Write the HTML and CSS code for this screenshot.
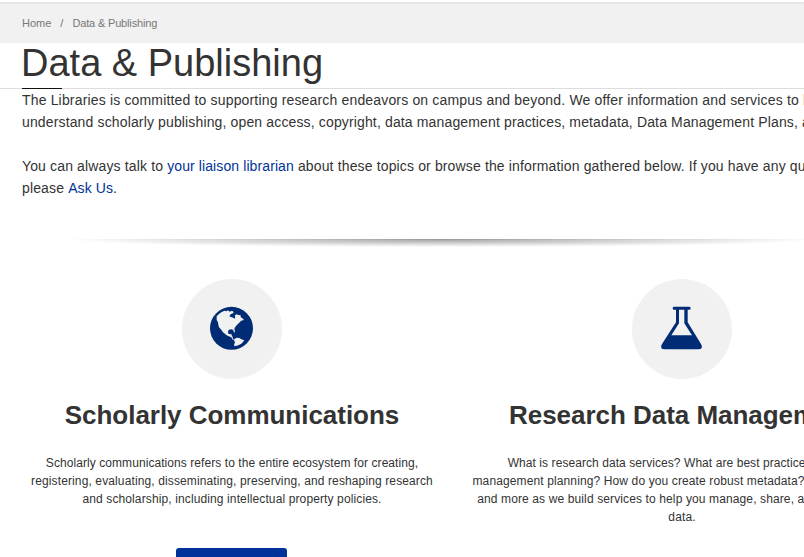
FILE: index.html
```
<!DOCTYPE html>
<html lang="en">
<head>
<meta charset="utf-8">
<title>Data &amp; Publishing</title>
<link rel="stylesheet" href="styles.css">
</head>
<body>
<nav class="breadcrumb"><a>Home</a><span class="sep">/</span><span class="current">Data &amp; Publishing</span></nav>
<header class="page-title"><h1>Data &amp; Publishing</h1></header>
<main>
<section class="intro">
<p><span class="lead">The Libraries is committed to supporting research endeavors on campus and beyond. We offer information and services to help</span><br>understand scholarly publishing, open access, copyright, data management practices, metadata, Data Management Plans, and</p>
<p>You can always talk to <a>your liaison librarian</a> about these topics or browse the information gathered below. If you have any questions<br>please <a>Ask Us</a>.</p>
</section>
<div class="divider"></div>
<section class="cards">
<article class="card">
<div class="icon"><svg viewBox="0 0 192 168" width="64" height="56"><circle cx="94.500" cy="85" r="64.500" fill="#002b75"/><path fill="#f1f1f1" d="M50 49L57 42 65 36 74 32 80 34 84 31 89 35 96 32 101 36 99 40 92 43 88 49 93 51 100 53 104 56 106 51 104 47 109 43 115 45 122 46 122 51 131 58 130 61 123 62 120 66 113 73 108 78 104 84 103 88 105 93 103 98 101 95 100 90 95 88 87 89 84 94 85 101 91 103 95 101 94 105 97 109 99 116 103 120 98 119 94 112 86 109 79 105 69 97 62 87 57 82 55 74 54 67 50 60Z"/><path fill="#f1f1f1" d="M104 116L111 113 118 114 124 118 133 121 129 126 124 131 115 136 104 139 102 134 105 127 102 121Z"/></svg></div>
<h2>Scholarly Communications</h2>
<p><span class="tight">Scholarly communications refers to the entire ecosystem for creating,</span><br>registering, evaluating, disseminating, preserving, and reshaping research<br>and scholarship, including intellectual property policies.</p>
<a class="button">Learn More</a>
</article>
<article class="card">
<div class="icon"><svg viewBox="0 0 192 168" width="64" height="56"><path fill="#002b75" fill-rule="evenodd" d="M72 20H118Q122 20 122 24.500T118 29H113V67L153 132Q162 148 144 148H45Q27 148 36 132L78 67V29H72Q68 29 68 24.500T72 20ZM87 29V70L64 106H126L103 70V29Z"/></svg></div>
<h2>Research Data Management</h2>
<p><span class="tight">What is research data services? What are best practices for data</span><br>management planning? How do you create robust metadata? Learn all of this<br>and more as we build services to help you manage, share, and access your<br>data.</p>
</article>
</section>
</main>
</body>
</html>
```
FILE: styles.css
```
* { box-sizing: border-box; }
body { margin: 0; width: 804px; height: 557px; overflow: hidden; background: #fff; color: #333; font-family: "Liberation Sans", Arial, sans-serif; }
.breadcrumb { height: 43px; padding: 12px 22px; background: #f1f1f1; border-top: 2px solid #fff; box-shadow: inset 0 2px 1px #e5e5e5; font-size: 11px; line-height: 18px; color: #777; }
.sep { margin: 0 9px; }
.current { letter-spacing: -.16px; }
.page-title { height: 46px; padding-left: 22px; border-bottom: 1px solid #ddd; }
h1 { position: relative; width: 320px; height: 46px; margin: 0; font-size: 38px; font-weight: 400; line-height: 41px; white-space: nowrap; text-indent: -1px; }
h1::after { content: ""; position: absolute; left: 0; bottom: 0; width: 40px; height: 1px; background: #111; }
main { height: 468px; overflow: hidden; }
.intro { padding-left: 22px; white-space: nowrap; font-size: 14px; line-height: 22px; letter-spacing: .142px; }
.lead { letter-spacing: .165px; }
.intro p { margin: 0 0 22px; }
.intro a { color: #039; letter-spacing: .1px; }
.divider { width: 840px; height: 8px; margin: 40px 0 0 22px; background: radial-gradient(ellipse 44% 100% at 50% 0, #aaa, #fff); border-top: 1px solid; border-image: linear-gradient(90deg, #fff 5%, #999 50%, #fff 95%) 1; }
.cards { display: grid; grid-template-columns: 420px 420px; gap: 30px; margin: 32px 0 0 22px; width: 870px; }
.card { display: flex; flex-direction: column; align-items: center; text-align: center; white-space: nowrap; }
.icon { display: flex; align-items: center; justify-content: center; width: 100px; height: 100px; border-radius: 50%; background: #f1f1f1; }
.icon svg { display: block; margin-bottom: 2px; }
h2 { margin: 18px 0 0; font-size: 26px; line-height: 36px; letter-spacing: -.03px; }
.card p { margin: 21px 0 0; font-size: 12px; line-height: 18px; letter-spacing: .12px; }
.card .tight { letter-spacing: .07px; }
.button { width: 111px; height: 40px; margin: 40px 1px 0 0; border-radius: 3px; background: #039; color: #fff; font-size: 14px; line-height: 40px; }
```
